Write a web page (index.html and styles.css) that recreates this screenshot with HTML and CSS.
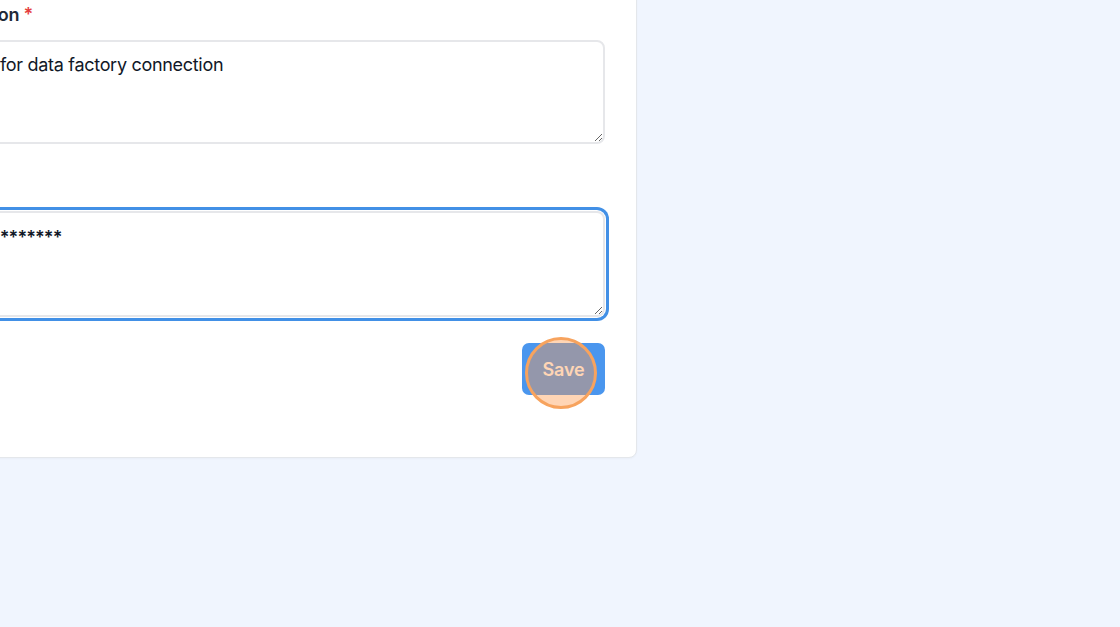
FILE: index.html
```html
<!DOCTYPE html>
<html lang="en">
<head>
<meta charset="utf-8">
<title>Connection form</title>
<link rel="stylesheet" href="styles.css">
</head>
<body>
  <main class="card">
    <div class="field">
      <label class="label">tion <span class="req">*</span></label>
      <textarea class="input">for data factory connection</textarea>
    </div>
    <div class="field field-secret">
      <textarea class="input input-secret focused">********</textarea>
    </div>
    <div class="actions">
      <div class="btn-wrap">
        <button class="btn-save" type="button">Save</button>
        <span class="click-marker"></span>
      </div>
    </div>
  </main>
</body>
</html>
```

FILE: styles.css
```css
html, body {
  margin: 0;
  padding: 0;
}
body {
  background: #f0f5fe;
  font-family: Inter, "Noto Sans", "Liberation Sans", sans-serif;
  height: 627px;
  overflow: hidden;
}
.card {
  box-sizing: border-box;
  width: 683px;
  margin-left: -46px;
  margin-top: -20px;
  padding: 22px 31px 62px 32px;
  background: #ffffff;
  border: 1px solid #e4e7eb;
  border-radius: 8px;
  box-shadow: 0 1px 2px rgba(0, 0, 0, 0.03);
}
.field {
  display: flex;
  flex-direction: column;
}
.label {
  font-size: 18px;
  line-height: 24px;
  font-weight: 600;
  color: #1f2937;
  margin-bottom: 13px;
  letter-spacing: -0.2px;
}
.req {
  color: #e53e3e;
}
.input {
  display: block;
  width: 100%;
  box-sizing: border-box;
  height: 104px;
  border: 2px solid #e6e7ea;
  border-radius: 8px;
  padding: 11px 12px 9px 11px;
  font-family: Inter, "Noto Sans", "Liberation Sans", sans-serif;
  font-size: 18px;
  line-height: 24px;
  letter-spacing: -0.3px;
  color: #111827;
  background: #fff;
  outline: none;
  resize: vertical;
}
.input-secret {
  height: 106px;
  padding-top: 13px;
  letter-spacing: -0.9px;
  text-indent: -9px;
  font-weight: 600;
}
.field-secret {
  margin-top: 67px;
}
.focused {
  box-shadow: 0 0 0 1px #ffffff, 0 0 0 4px #4290e6;
}
.actions {
  display: flex;
  justify-content: flex-end;
  margin-top: 26px;
}
.btn-wrap {
  position: relative;
}
.btn-save {
  display: block;
  width: 83px;
  height: 52px;
  border: none;
  border-radius: 7px;
  background: #4a96ee;
  color: #ffffff;
  font-family: Inter, "Noto Sans", "Liberation Sans", sans-serif;
  font-size: 18px;
  font-weight: 600;
  letter-spacing: -0.2px;
  cursor: pointer;
}
.click-marker {
  position: absolute;
  left: 3px;
  top: -6px;
  width: 72px;
  height: 72px;
  box-sizing: border-box;
  border-radius: 50%;
  border: 3px solid #f7a35e;
  background: rgba(255, 153, 75, 0.41);
  pointer-events: none;
}
```
